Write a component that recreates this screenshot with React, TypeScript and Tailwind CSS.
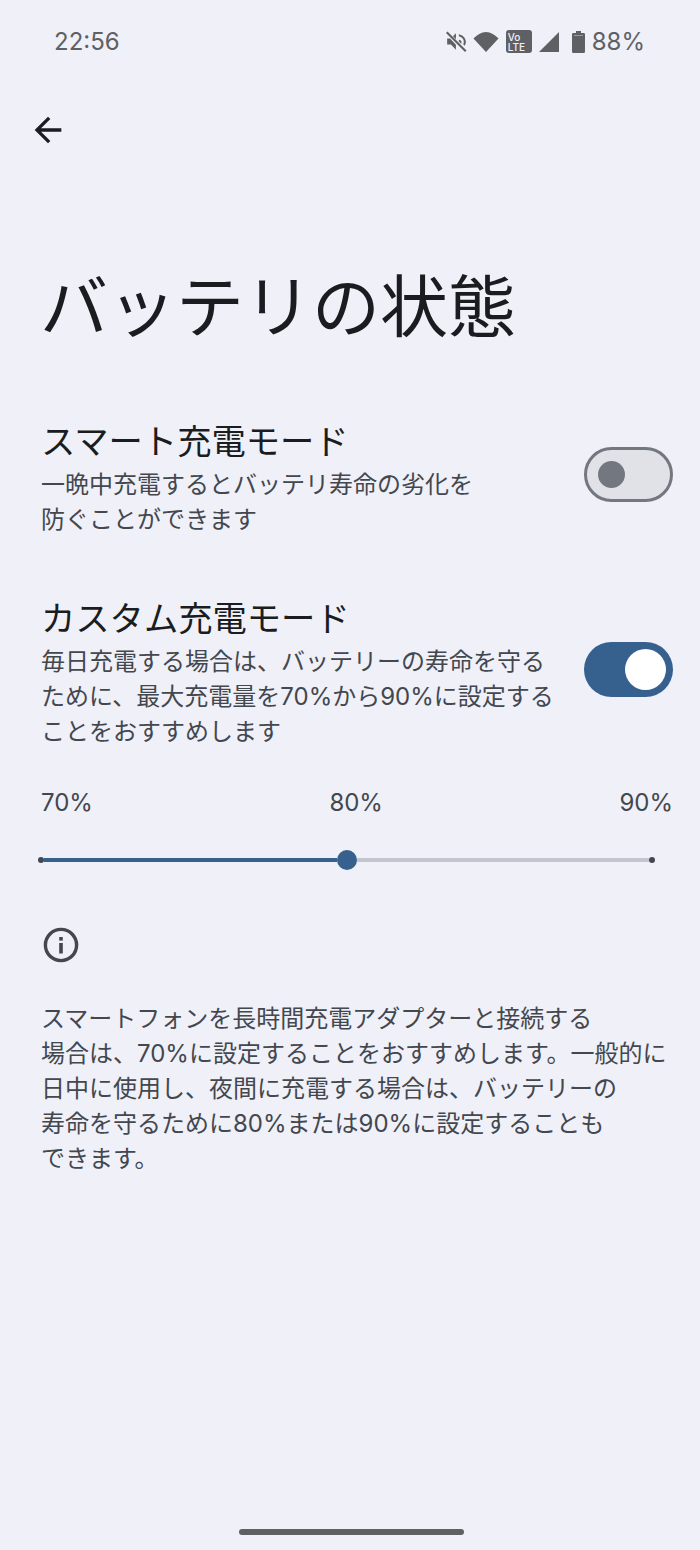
const FONT = "font-['Inter','Noto_Sans_CJK_JP',sans-serif]";

function MutedIcon() {
  return (
    <svg className="shrink-0" width="21" height="21" viewBox="3 3 18 18" fill="#5f6064">
      <path d="M4 9.500v5h3.200L11.500 19v-4.300L6.500 9.500H4z" />
      <path d="M11.500 5 9 7.400l2.500 2.600V5z" />
      <path d="M14 7.600c2.400.7 4.300 2.400 4.300 4.600 0 .8-.2 1.500-.6 2.100l1.300 1.300c.7-1 1-2.100 1-3.400 0-3.200-2.500-5.700-6-6.500v1.900z" />
      <path d="M14 10.400v1.500l2 2c.2-.5.300-1 .3-1.500 0-1-.9-1.700-2.300-2z" />
      <path d="M4.300 3.400 3 4.700 19.300 21l1.300-1.300L4.300 3.400z" />
    </svg>
  );
}

function StatusIcons() {
  return (
    <div className="flex items-center">
      <MutedIcon />
      <svg className="ml-[6px] shrink-0" width="26" height="20" viewBox="0 0 26 20" fill="#5f6064">
        <path d="M13 20 .5 6.500C4 3 8.200 0 13 0s9 3 12.500 6.500L13 20z" />
      </svg>
      <div className="ml-[7px] flex h-[23px] w-[26px] shrink-0 flex-col justify-center rounded-[3px] bg-[#5f6064] pl-[2px] text-[10px] leading-[10px] font-medium text-[#eff0f8]">
        <span>Vo</span>
        <span>LTE</span>
      </div>
      <svg className="ml-[7px] shrink-0" width="20" height="20" viewBox="0 0 20 20" fill="#5f6064">
        <path d="M20 0v20H0L20 0z" />
      </svg>
      <svg className="ml-[13px] shrink-0" width="13" height="22" viewBox="0 0 13 22" fill="#5f6064">
        <path d="M4 0h5v2h2.700A1.300 1.300 0 0 1 13 3.300v17.400a1.300 1.300 0 0 1-1.300 1.300H1.300A1.300 1.300 0 0 1 0 20.700V3.300A1.300 1.300 0 0 1 1.300 2H4V0z" />
        <rect x="2" y="4" width="9" height="1" fill="#9b9ca2" />
      </svg>
      <span className="ml-[7px] text-[24px] leading-none text-[#5f6064]">88%</span>
    </div>
  );
}

function Toggle({ on }: { on: boolean }) {
  if (on) {
    return (
      <div className="flex h-[55px] w-[89px] shrink-0 items-center justify-end rounded-full bg-[#36618e] pr-[7px]">
        <div className="h-[41px] w-[41px] rounded-full bg-white" />
      </div>
    );
  }
  return (
    <div className="flex h-[55px] w-[89px] shrink-0 items-center rounded-full border-[3px] border-[#73777f] bg-[#e0e2e8] pl-[11px]">
      <div className="h-[27px] w-[27px] rounded-full bg-[#73777f]" />
    </div>
  );
}

function Setting({ title, lines, on }: { title: string; lines: string[]; on: boolean }) {
  return (
    <div className="flex items-center justify-between">
      <div>
        <div className="text-[34.3px] leading-[44px] text-[#1a1c20]">{title}</div>
        <div className="mt-[3px] text-[24px] leading-[35px] text-[#43474e]">
          {lines.map((line) => (
            <div key={line} className="whitespace-nowrap">{line}</div>
          ))}
        </div>
      </div>
      <div className="pb-[8px]">
        <Toggle on={on} />
      </div>
    </div>
  );
}

export default function App() {
  return (
    <div className={`${FONT} h-[1550px] w-[700px] overflow-hidden bg-[#eff0f8]`}>
      {/* Status bar */}
      <div className="flex h-[83px] items-center justify-between pr-[55px] pl-[54px]">
        <span className="text-[24px] leading-none text-[#5f6064]">22:56</span>
        <StatusIcons />
      </div>

      <div className="flex h-[93px] items-center pl-[28px]">
        <svg width="40" height="40" viewBox="0 0 24 24" fill="#1a1c20">
          <path d="M20 11H7.830l5.590-5.590L12 4l-8 8 8 8 1.410-1.410L7.830 13H20v-2z" />
        </svg>
      </div>

      <div className="mt-[86px] pl-[40px] text-[68px] leading-[90px] text-[#1a1c20]">バッテリの状態</div>

      <div className="mt-[68px] pr-[27px] pl-[41px]">
        <Setting
          title="スマート充電モード"
          lines={["一晩中充電するとバッテリ寿命の劣化を", "防ぐことができます"]}
          on={false}
        />
        <div className="mt-[60px]">
          <Setting
            title="カスタム充電モード"
            lines={["毎日充電する場合は、バッテリーの寿命を守る", "ために、最大充電量を70%から90%に設定する", "ことをおすすめします"]}
            on={true}
          />
        </div>
      </div>

      {/* Slider */}
      <div className="mt-[38px] flex justify-between pr-[27px] pl-[41px] text-[24px] leading-[32px] text-[#43474e]">
        <span>70%</span>
        <span>80%</span>
        <span>90%</span>
      </div>
      <div className="mt-[29px] flex h-[24px] items-center pl-[38px]">
        <div className="h-[6px] w-[6px] rounded-full bg-[#43474e]" />
        <div className="h-[4px] w-[293px] bg-[#36618e]" />
        <div className="h-[20px] w-[20px] rounded-full bg-[#36618e]" />
        <div className="h-[4px] w-[292px] bg-[#c3c5cf]" />
        <div className="h-[6px] w-[6px] rounded-full bg-[#43474e]" />
      </div>

      <div className="mt-[52px] pl-[40px]">
        <svg width="42" height="42" viewBox="0 0 42 42" fill="none">
          <circle cx="21" cy="21" r="15.600" stroke="#43474e" strokeWidth="3.400" />
          <rect x="19.200" y="19" width="3.600" height="10.500" fill="#43474e" />
          <rect x="19.200" y="13" width="3.600" height="3.600" fill="#43474e" />
        </svg>
      </div>

      <div className="mt-[35px] pl-[41px] text-[24px] leading-[35px] text-[#43474e]">
        <div className="whitespace-nowrap">スマートフォンを長時間充電アダプターと接続する</div>
        <div className="whitespace-nowrap">場合は、70%に設定することをおすすめします。一般的に</div>
        <div className="whitespace-nowrap">日中に使用し、夜間に充電する場合は、バッテリーの</div>
        <div className="whitespace-nowrap">寿命を守るために80%または90%に設定することも</div>
        <div className="whitespace-nowrap">できます。</div>
      </div>

      {/* Gesture bar */}
      <div className="mt-[353px] ml-[239px] h-[6px] w-[225px] rounded-full bg-[#5f6064]" />
    </div>
  );
}
